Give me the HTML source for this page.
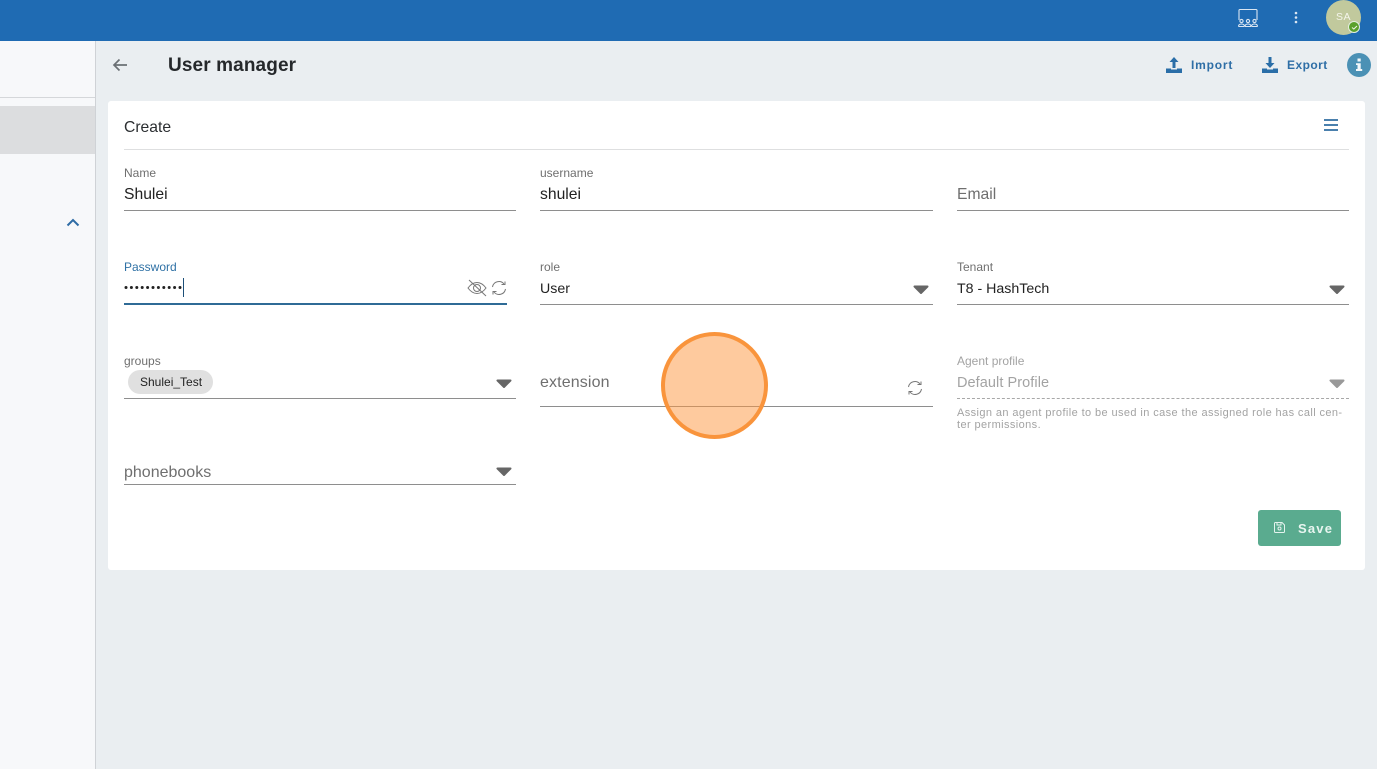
<!DOCTYPE html>
<html>
<head>
<meta charset="utf-8">
<style>
html,body{margin:0;padding:0;width:1377px;height:769px;overflow:hidden;background:#eaeef1;font-family:"Liberation Sans",sans-serif;color:#212529}
div,span{position:absolute;white-space:nowrap}
svg{position:absolute;overflow:visible}
.lbl{font-size:12px;line-height:14px;color:#6f6f6f}
.val{font-size:14.5px;line-height:18px;color:#222}
.ph{font-size:16px;line-height:20px;color:#6f6f6f}
.ln{height:1px;background:#8e8e8e}
</style>
</head>
<body>
<div style="left:0;top:0;width:1377px;height:41px;background:#1f6bb3"></div>
<svg style="left:1236px;top:8px" width="24" height="20" viewBox="0 0 24 20" fill="none" stroke="#dbe6f2" stroke-width="1.1">
<path d="M3 12V2.500Q3 1.500 4 1.500H20Q21 1.500 21 2.500V12"/>
<circle cx="5.500" cy="13" r="1.600"/><circle cx="12" cy="13" r="1.600"/><circle cx="18.500" cy="13" r="1.600"/>
<path d="M2.500 18.500H8.500M9 18.500H15M15.500 18.500H21.500M2.500 18.500Q2.500 16 5.500 16Q8.500 16 8.500 18.500M9 18.500Q9 16 12 16Q15 16 15 18.500M15.500 18.500Q15.500 16 18.500 16Q21.500 16 21.500 18.500"/>
</svg>
<svg style="left:1294px;top:11px" width="4" height="14"><circle cx="2" cy="2" r="1.300" fill="#dbe6f2"/><circle cx="2" cy="6.500" r="1.300" fill="#dbe6f2"/><circle cx="2" cy="11" r="1.300" fill="#dbe6f2"/></svg>
<div style="left:1326px;top:0;width:35px;height:35px;border-radius:50%;background:#c1c99d"></div>
<div style="left:1326px;top:10px;width:35px;text-align:center;font-size:10.500px;line-height:14px;color:#f4f4ea;letter-spacing:.5px">SA</div>
<div style="left:1348px;top:21px;width:10px;height:10px;border-radius:50%;background:#5aa02c;border:1.500px solid #e4eee0"></div>
<svg style="left:1351px;top:25px" width="7" height="5" fill="none" stroke="#e8f2e0" stroke-width="1.100"><path d="M1 2.500L2.800 4L6 1"/></svg>

<div style="left:0;top:41px;width:95px;height:728px;background:#f7f8fa;border-right:1px solid #cfd2d6"></div>
<div style="left:0;top:97px;width:95px;height:1px;background:#d5d7da"></div>
<div style="left:0;top:106px;width:95px;height:48px;background:#dcdddf"></div>
<svg style="left:66px;top:218px" width="14" height="9" fill="none" stroke="#2f6ca5" stroke-width="2"><path d="M1.500 7.500L7 2L12.500 7.500"/></svg>

<svg style="left:112px;top:58px" width="16" height="14" fill="none" stroke="#6b7075" stroke-width="1.700"><path d="M15 7H2M7.500 1.500L2 7L7.500 12.500"/></svg>
<div style="left:168px;top:54px;font-size:19px;line-height:24px;font-weight:bold;color:#25282b;letter-spacing:.12px">User manager</div>

<svg style="left:1165px;top:56px" width="18" height="18" viewBox="0 0 18 18" fill="#2a6ea8"><path d="M9 1L13.500 6H10.500V12H7.500V6H4.500Z"/><path d="M1 12.500H6V13.500H12V12.500H17V17H1Z"/></svg>
<div style="left:1191px;top:57px;font-size:12px;line-height:16px;font-weight:bold;color:#2e6ea6;letter-spacing:.8px">Import</div>
<svg style="left:1261px;top:56px" width="18" height="18" viewBox="0 0 18 18" fill="#2a6ea8"><path d="M7.500 1H10.500V7H13.500L9 12L4.500 7H7.500Z"/><path d="M1 12.500H6V13.500H12V12.500H17V17H1Z"/></svg>
<div style="left:1287px;top:57px;font-size:12px;line-height:16px;font-weight:bold;color:#2e6ea6;letter-spacing:.45px">Export</div>
<div style="left:1347px;top:53px;width:24px;height:24px;border-radius:50%;background:#4b91b5"></div>
<svg style="left:1354px;top:58px" width="10" height="14" fill="#f2f7fa"><rect x="3.500" y="0.500" width="3.200" height="3"/><path d="M2 5.200H6.700V11H8.200V13H2V11H3.500V7H2Z"/></svg>

<div style="left:108px;top:101px;width:1257px;height:469px;background:#fff;border-radius:3px"></div>
<div style="left:124px;top:118px;font-size:15.700px;line-height:20px;color:#2b2e31">Create</div>
<svg style="left:1324px;top:119px" width="14" height="12" fill="#4a80ad"><rect y="0" width="14" height="2"/><rect y="5" width="14" height="2"/><rect y="10" width="14" height="2"/></svg>
<div style="left:124px;top:149px;width:1225px;height:1px;background:#dedfe0"></div>

<div class="lbl" style="left:124px;top:166px">Name</div>
<div class="val" style="left:124px;top:186px;font-size:15.700px">Shulei</div>
<div class="ln" style="left:124px;top:210px;width:392px"></div>

<div class="lbl" style="left:540px;top:166px">username</div>
<div class="val" style="left:540px;top:186px;font-size:15.700px">shulei</div>
<div class="ln" style="left:540px;top:210px;width:393px"></div>

<div class="ph" style="left:957px;top:185px;font-size:15.700px">Email</div>
<div class="ln" style="left:957px;top:210px;width:392px"></div>

<div class="lbl" style="left:124px;top:260px;color:#2f71a5">Password</div>
<svg style="left:124px;top:284px" width="60" height="6" fill="#222">
<circle cx="2" cy="3.500" r="1.500"/><circle cx="7.400" cy="3.500" r="1.500"/><circle cx="12.800" cy="3.500" r="1.500"/><circle cx="18.200" cy="3.500" r="1.500"/><circle cx="23.600" cy="3.500" r="1.500"/><circle cx="29" cy="3.500" r="1.500"/><circle cx="34.400" cy="3.500" r="1.500"/><circle cx="39.800" cy="3.500" r="1.500"/><circle cx="45.200" cy="3.500" r="1.500"/><circle cx="50.600" cy="3.500" r="1.500"/><circle cx="56" cy="3.500" r="1.500"/>
</svg>
<div style="left:183px;top:278px;width:1px;height:19px;background:#1d4f78"></div>
<svg style="left:467px;top:279px" width="20" height="18" viewBox="0 0 20 18" fill="none" stroke="#777" stroke-width="1"><path d="M1 9Q5 3.500 10 3.500Q15 3.500 19 9Q15 14.500 10 14.500Q5 14.500 1 9Z"/><circle cx="10" cy="9" r="3.500"/><path d="M2 1L19 17"/></svg>
<svg style="left:491px;top:280px" width="16" height="16" viewBox="0 0 16 16" fill="none" stroke="#777" stroke-width="1"><path d="M1.500 7A6.500 6.500 0 0 1 13 4M14.500 9A6.500 6.500 0 0 1 3 12"/><path d="M10.500 4.500H14V1.500M5.500 11.500H2V14.500"/></svg>
<div style="left:124px;top:303px;width:383px;height:2px;background:#2f6b96"></div>

<div class="lbl" style="left:540px;top:260px">role</div>
<div class="val" style="left:540px;top:280px;font-size:14.200px">User</div>
<svg style="left:913px;top:285px" width="17" height="10" fill="#666" stroke="#666" stroke-width="2" stroke-linejoin="round"><path d="M1.500 1.500H14.500L8 8Z"/></svg>
<div class="ln" style="left:540px;top:304px;width:393px"></div>

<div class="lbl" style="left:957px;top:260px">Tenant</div>
<div class="val" style="left:957px;top:280px;font-size:14.200px">T8 - HashTech</div>
<svg style="left:1329px;top:285px" width="17" height="10" fill="#666" stroke="#666" stroke-width="2" stroke-linejoin="round"><path d="M1.500 1.500H14.500L8 8Z"/></svg>
<div class="ln" style="left:957px;top:304px;width:392px"></div>

<div class="lbl" style="left:124px;top:354px">groups</div>
<div style="left:128px;top:370px;width:85px;height:24px;border-radius:12px;background:#e0e0e0"></div>
<div style="left:140px;top:374px;font-size:12px;line-height:16px;color:#222">Shulei_Test</div>
<svg style="left:496px;top:379px" width="17" height="10" fill="#666" stroke="#666" stroke-width="2" stroke-linejoin="round"><path d="M1.500 1.500H14.500L8 8Z"/></svg>
<div class="ln" style="left:124px;top:398px;width:392px"></div>

<div class="ph" style="left:540px;top:373px;letter-spacing:.13px">extension</div>
<svg style="left:907px;top:380px" width="16" height="16" viewBox="0 0 16 16" fill="none" stroke="#777" stroke-width="1"><path d="M1.500 7A6.500 6.500 0 0 1 13 4M14.500 9A6.500 6.500 0 0 1 3 12"/><path d="M10.500 4.500H14V1.500M5.500 11.500H2V14.500"/></svg>
<div class="ln" style="left:540px;top:406px;width:393px"></div>

<div class="lbl" style="left:957px;top:354px;color:#a3a3a3">Agent profile</div>
<div style="left:957px;top:374px;font-size:14.500px;line-height:18px;color:#a3a3a3;letter-spacing:.07px">Default Profile</div>
<svg style="left:1329px;top:379px" width="17" height="10" fill="#999" stroke="#999" stroke-width="2" stroke-linejoin="round"><path d="M1.500 1.500H14.500L8 8Z"/></svg>
<div style="left:957px;top:398px;width:392px;border-top:1px dashed #a8a8a8"></div>
<div style="left:957px;top:407px;font-size:11px;line-height:12px;color:#a3a3a3;letter-spacing:.4px">Assign an agent profile to be used in case the assigned role has call cen-<br>ter permissions.</div>

<div class="ph" style="left:124px;top:463px;letter-spacing:0">phonebooks</div>
<svg style="left:496px;top:467px" width="17" height="10" fill="#666" stroke="#666" stroke-width="2" stroke-linejoin="round"><path d="M1.500 1.500H14.500L8 8Z"/></svg>
<div class="ln" style="left:124px;top:484px;width:392px"></div>

<div style="left:1258px;top:510px;width:83px;height:36px;border-radius:3px;background:#5aab8f"></div>
<svg style="left:1274px;top:522px" width="11" height="11" fill="none" stroke="#e4f3ee" stroke-width="1"><path d="M.5 1.500Q.5 .5 1.500 .5H8L10.500 3V9.500Q10.500 10.500 9.500 10.500H1.500Q.5 10.500 .5 9.500Z"/><circle cx="5.500" cy="6.500" r="1.500"/><path d="M3 .5V3H7V.5"/></svg>
<div style="left:1298px;top:520px;font-size:13px;line-height:17px;font-weight:bold;color:#e8f5f0;letter-spacing:1.200px">Save</div>

<div style="left:661px;top:332px;width:107px;height:107px;box-sizing:border-box;border-radius:50%;background:rgba(253,150,62,.5);border:4px solid #f9943c"></div>
</body>
</html>
